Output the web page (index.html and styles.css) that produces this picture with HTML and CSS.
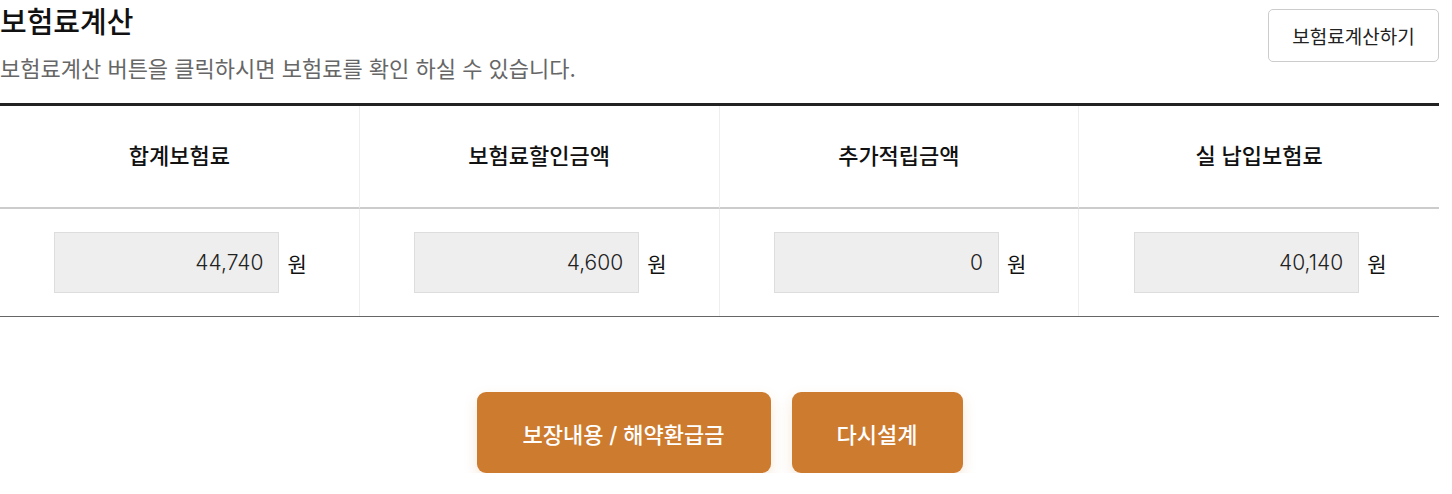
FILE: index.html
```html
<!DOCTYPE html>
<html lang="ko">
<head>
<meta charset="utf-8">
<link rel="stylesheet" href="styles.css">
</head>
<body>
<div class="wrap">
  <div class="head">
    <div class="head-text">
      <h2 class="title">보험료계산</h2>
      <p class="desc">보험료계산 버튼을 클릭하시면 보험료를 확인 하실 수 있습니다.</p>
    </div>
    <button class="calc-btn">보험료계산하기</button>
  </div>
  <div class="table">
    <div class="th">합계보험료</div>
    <div class="th">보험료할인금액</div>
    <div class="th">추가적립금액</div>
    <div class="th">실 납입보험료</div>
    <div class="td"><span class="val">44,740</span><span class="unit">원</span></div>
    <div class="td"><span class="val">4,600</span><span class="unit">원</span></div>
    <div class="td"><span class="val">0</span><span class="unit">원</span></div>
    <div class="td"><span class="val">40,140</span><span class="unit">원</span></div>
  </div>
  <div class="actions">
    <button class="btn btn-wide">보장내용 / 해약환급금</button>
    <button class="btn btn-narrow">다시설계</button>
  </div>
</div>
</body>
</html>
```
FILE: styles.css
```css
* { box-sizing: border-box; }
html, body { margin: 0; padding: 0; background: #fff; }
body {
  font-family: "Inter", "Noto Sans CJK KR", "Noto Sans", sans-serif;
  color: #111;
}
.wrap { width: 1439px; }
.head {
  display: flex;
  justify-content: space-between;
  align-items: flex-start;
  height: 103px;
}
.title {
  margin: 0;
  padding-top: 2px;
  font-size: 29px;
  font-weight: 500;
  line-height: 42px;
  letter-spacing: 0;
}
.desc {
  margin: 10px 0 0;
  font-size: 22px;
  line-height: 30px;
  color: #666;
  font-weight: 400;
}
.calc-btn {
  margin-top: 9px;
  width: 171px;
  height: 53px;
  border: 1px solid #ccc;
  border-radius: 5px;
  background: #fff;
  font-family: inherit;
  font-size: 19px;
  color: #222;
}
.table {
  display: grid;
  grid-template-columns: repeat(4, 1fr);
  border-top: 3px solid #222;
  border-bottom: 1px solid #666;
}
.th {
  height: 103px;
  display: flex;
  align-items: center;
  justify-content: center;
  font-size: 22px;
  font-weight: 500;
  border-bottom: 2px solid #ccc;
  border-right: 1px solid #eee;
  padding-bottom: 6px;
}
.td {
  height: 107px;
  display: flex;
  align-items: center;
  justify-content: center;
  border-right: 1px solid #eee;
  padding-left: 2px;
}
.th:nth-child(4), .td:nth-child(8) { border-right: none; }
.val {
  width: 225px;
  height: 61px;
  background: #eee;
  border: 1px solid #ddd;
  display: flex;
  align-items: center;
  justify-content: flex-end;
  padding-right: 15px;
  font-size: 21px;
  font-weight: 300;
  color: #222;
}
.unit {
  margin-left: 8px;
  font-size: 21px;
  font-weight: 400;
  width: 19px;
}
.actions {
  display: flex;
  justify-content: center;
  gap: 21px;
  margin-top: 75px;
}
.btn {
  height: 81px;
  border: none;
  border-radius: 9px;
  background: #cd7b2f;
  color: #fff;
  font-family: inherit;
  font-size: 22px;
  font-weight: 500;
  box-shadow: 0 6px 14px rgba(205, 123, 47, 0.18);
}
.btn-wide { width: 294px; }
.btn-narrow { width: 171px; }
```
